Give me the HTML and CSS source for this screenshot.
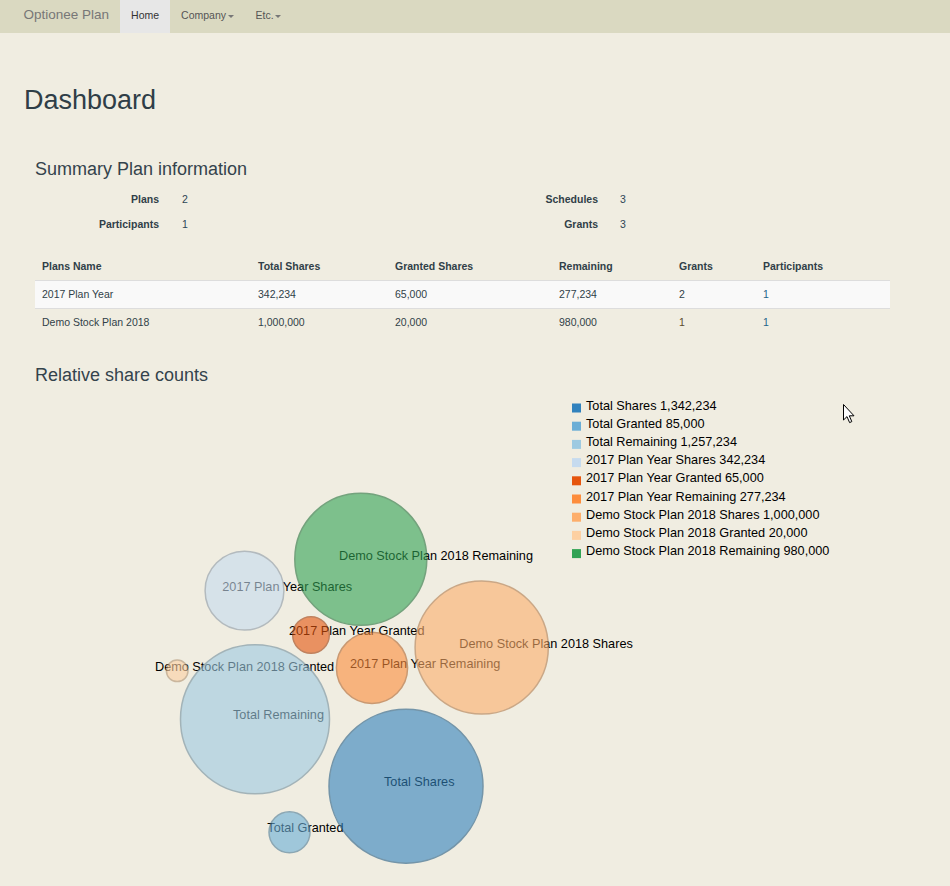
FILE: index.html
```html
<!DOCTYPE html>
<html>
<head>
<meta charset="utf-8">
<title>Optionee Plan</title>
<link rel="stylesheet" href="styles.css">
</head>
<body>
<nav class="navbar">
  <span class="brand">Optionee Plan</span>
  <ul class="nav">
    <li class="active">Home</li>
    <li>Company<span class="caret"></span></li>
    <li>Etc.<span class="caret"></span></li>
  </ul>
</nav>
<main class="main">
  <h1 class="title">Dashboard</h1>
  <section class="panel">
    <h3 class="sub">Summary Plan information</h3>
    <div class="summary">
      <div class="lbl">Plans</div><div class="val">2</div>
      <div class="lbl">Schedules</div><div class="val val-r">3</div>
      <div class="lbl">Participants</div><div class="val">1</div>
      <div class="lbl">Grants</div><div class="val val-r">3</div>
    </div>
    <table class="plans">
      <colgroup>
        <col class="c1"><col class="c2"><col class="c3"><col class="c4"><col class="c5"><col class="c6">
      </colgroup>
      <thead>
        <tr><th>Plans Name</th><th>Total Shares</th><th>Granted Shares</th><th>Remaining</th><th>Grants</th><th>Participants</th></tr>
      </thead>
      <tbody>
        <tr class="striped"><td>2017 Plan Year</td><td>342,234</td><td>65,000</td><td>277,234</td><td>2</td><td class="link">1</td></tr>
        <tr><td>Demo Stock Plan 2018</td><td>1,000,000</td><td>20,000</td><td>980,000</td><td class="link-b">1</td><td class="link">1</td></tr>
      </tbody>
    </table>
    <h3 class="sub sub-chart">Relative share counts</h3>
    <svg class="chart" width="855" height="495" viewBox="35 385 855 495">
      <g class="labels">
        <text x="339" y="560">Demo Stock Plan 2018 Remaining</text>
        <text x="222.3" y="591">2017 Plan Year Shares</text>
        <text x="289" y="635">2017 Plan Year Granted</text>
        <text x="459.3" y="647.7">Demo Stock Plan 2018 Shares</text>
        <text x="155" y="670.7">Demo Stock Plan 2018 Granted</text>
        <text x="350" y="667.7">2017 Plan Year Remaining</text>
        <text x="233" y="719">Total Remaining</text>
        <text x="384" y="786">Total Shares</text>
        <text x="267.3" y="831.5">Total Granted</text>
      </g>
      <g class="bubbles">
        <circle cx="406" cy="786.2" r="77" fill="#3182bd" stroke="#225b84"/>
        <circle cx="289.5" cy="832.3" r="20.5" fill="#6baed6" stroke="#4b7a96"/>
        <circle cx="255" cy="719.3" r="74.5" fill="#9ecae1" stroke="#6f8d9e"/>
        <circle cx="244.5" cy="590.7" r="39.4" fill="#c6dbef" stroke="#8b99a7"/>
        <circle cx="311" cy="635" r="18.3" fill="#e6550d" stroke="#a13c09"/>
        <circle cx="372" cy="667.8" r="35.6" fill="#fd8d3c" stroke="#b1632a"/>
        <circle cx="481.7" cy="647.5" r="66.6" fill="#fdae6b" stroke="#b17a4b"/>
        <circle cx="177.2" cy="670.8" r="10.8" fill="#fdd0a2" stroke="#b19271"/>
        <circle cx="360.8" cy="559.3" r="66" fill="#31a354" stroke="#22723b"/>
      </g>
      <g class="legend">
        <rect x="572" y="403.5" width="9" height="9" fill="#3182bd"/>
        <text x="586" y="409.5">Total Shares 1,342,234</text>
        <rect x="572" y="421.7" width="9" height="9" fill="#6baed6"/>
        <text x="586" y="427.7">Total Granted 85,000</text>
        <rect x="572" y="439.9" width="9" height="9" fill="#9ecae1"/>
        <text x="586" y="445.9">Total Remaining 1,257,234</text>
        <rect x="572" y="458.1" width="9" height="9" fill="#c6dbef"/>
        <text x="586" y="464.1">2017 Plan Year Shares 342,234</text>
        <rect x="572" y="476.3" width="9" height="9" fill="#e6550d"/>
        <text x="586" y="482.3">2017 Plan Year Granted 65,000</text>
        <rect x="572" y="494.5" width="9" height="9" fill="#fd8d3c"/>
        <text x="586" y="500.5">2017 Plan Year Remaining 277,234</text>
        <rect x="572" y="512.7" width="9" height="9" fill="#fdae6b"/>
        <text x="586" y="518.7">Demo Stock Plan 2018 Shares 1,000,000</text>
        <rect x="572" y="530.9" width="9" height="9" fill="#fdd0a2"/>
        <text x="586" y="536.9">Demo Stock Plan 2018 Granted 20,000</text>
        <rect x="572" y="549.1" width="9" height="9" fill="#31a354"/>
        <text x="586" y="555.1">Demo Stock Plan 2018 Remaining 980,000</text>
      </g>
    </svg>
  </section>
</main>
<svg class="cursor" width="12" height="21" viewBox="0 0 12 21">
  <path d="M0.5 0.5 L0.5 16 L4 12.6 L6.6 18.6 L8.8 17.6 L6.3 11.8 L11 11.8 Z" fill="#fff" stroke="#000" stroke-width="1" stroke-linejoin="miter"/>
</svg>
</body>
</html>
```
FILE: styles.css
```css
html, body {
  margin: 0;
  padding: 0;
  overflow: hidden;
}
body {
  background: #f0ede1;
  font-family: "Liberation Sans", Arial, sans-serif;
  color: #303f48;
  position: relative;
  height: 886px;
}
.navbar {
  display: flex;
  align-items: flex-start;
  height: 33px;
  background: #dad9c1;
}
.brand {
  padding: 0 11px 0 23.5px;
  font-size: 13.5px;
  line-height: 29px;
  color: #777;
}
.nav {
  display: flex;
  list-style: none;
  margin: 0;
  padding: 0;
}
.nav li {
  height: 33px;
  box-sizing: border-box;
  padding: 0 11px;
  font-size: 10.5px;
  line-height: 30px;
  color: #555;
}
.nav li.active {
  background: #e7e7e7;
  color: #333;
}
.caret {
  display: inline-block;
  width: 0;
  height: 0;
  margin-left: 1.5px;
  vertical-align: middle;
  border-top: 3px solid #777;
  border-left: 3px solid transparent;
  border-right: 3px solid transparent;
}
.main {
  padding: 0 24px;
}
.title {
  margin: 52px 0 0;
  font-size: 27px;
  line-height: 30px;
  font-weight: normal;
  color: #2f3e47;
}
.panel {
  margin-left: 11px;
  width: 855px;
}
.sub {
  margin: 44px 0 0;
  font-size: 18px;
  line-height: 20px;
  font-weight: normal;
  color: #34434c;
}
.sub-chart {
  margin-top: 28.8px;
}
.summary {
  margin-top: 13px;
  display: grid;
  grid-template-columns: 124px 293px 146px 1fr;
  grid-auto-rows: 15px;
  row-gap: 10px;
  font-size: 10.5px;
  line-height: 15px;
}
.lbl {
  text-align: right;
  font-weight: bold;
}
.val {
  padding-left: 23px;
  color: #2e4655;
}
.val-r {
  padding-left: 22px;
}
.plans {
  margin-top: 21px;
  width: 855px;
  table-layout: fixed;
  border-collapse: separate;
  border-spacing: 0;
  font-size: 10.5px;
  line-height: 15px;
}
.c1 { width: 216px; }
.c2 { width: 137px; }
.c3 { width: 164px; }
.c4 { width: 120px; }
.c5 { width: 84px; }
.c6 { width: 134px; }
.plans th {
  text-align: left;
  font-weight: bold;
  padding: 6px 7px;
}
.plans td {
  border-top: 1px solid #dddddd;
  padding: 6px 7px;
}
.plans .striped td {
  background: #f9f9f9;
}
.link {
  color: #24648a;
}
.link-b {
  color: #5a4b2c;
}
.chart {
  display: block;
}
.chart text {
  font-family: "Liberation Sans", Arial, sans-serif;
  font-size: 12.7px;
  fill: #000;
}
.bubbles circle {
  opacity: 0.6;
  stroke-width: 1.5;
}
.cursor {
  position: absolute;
  left: 842.5px;
  top: 404px;
}
```
